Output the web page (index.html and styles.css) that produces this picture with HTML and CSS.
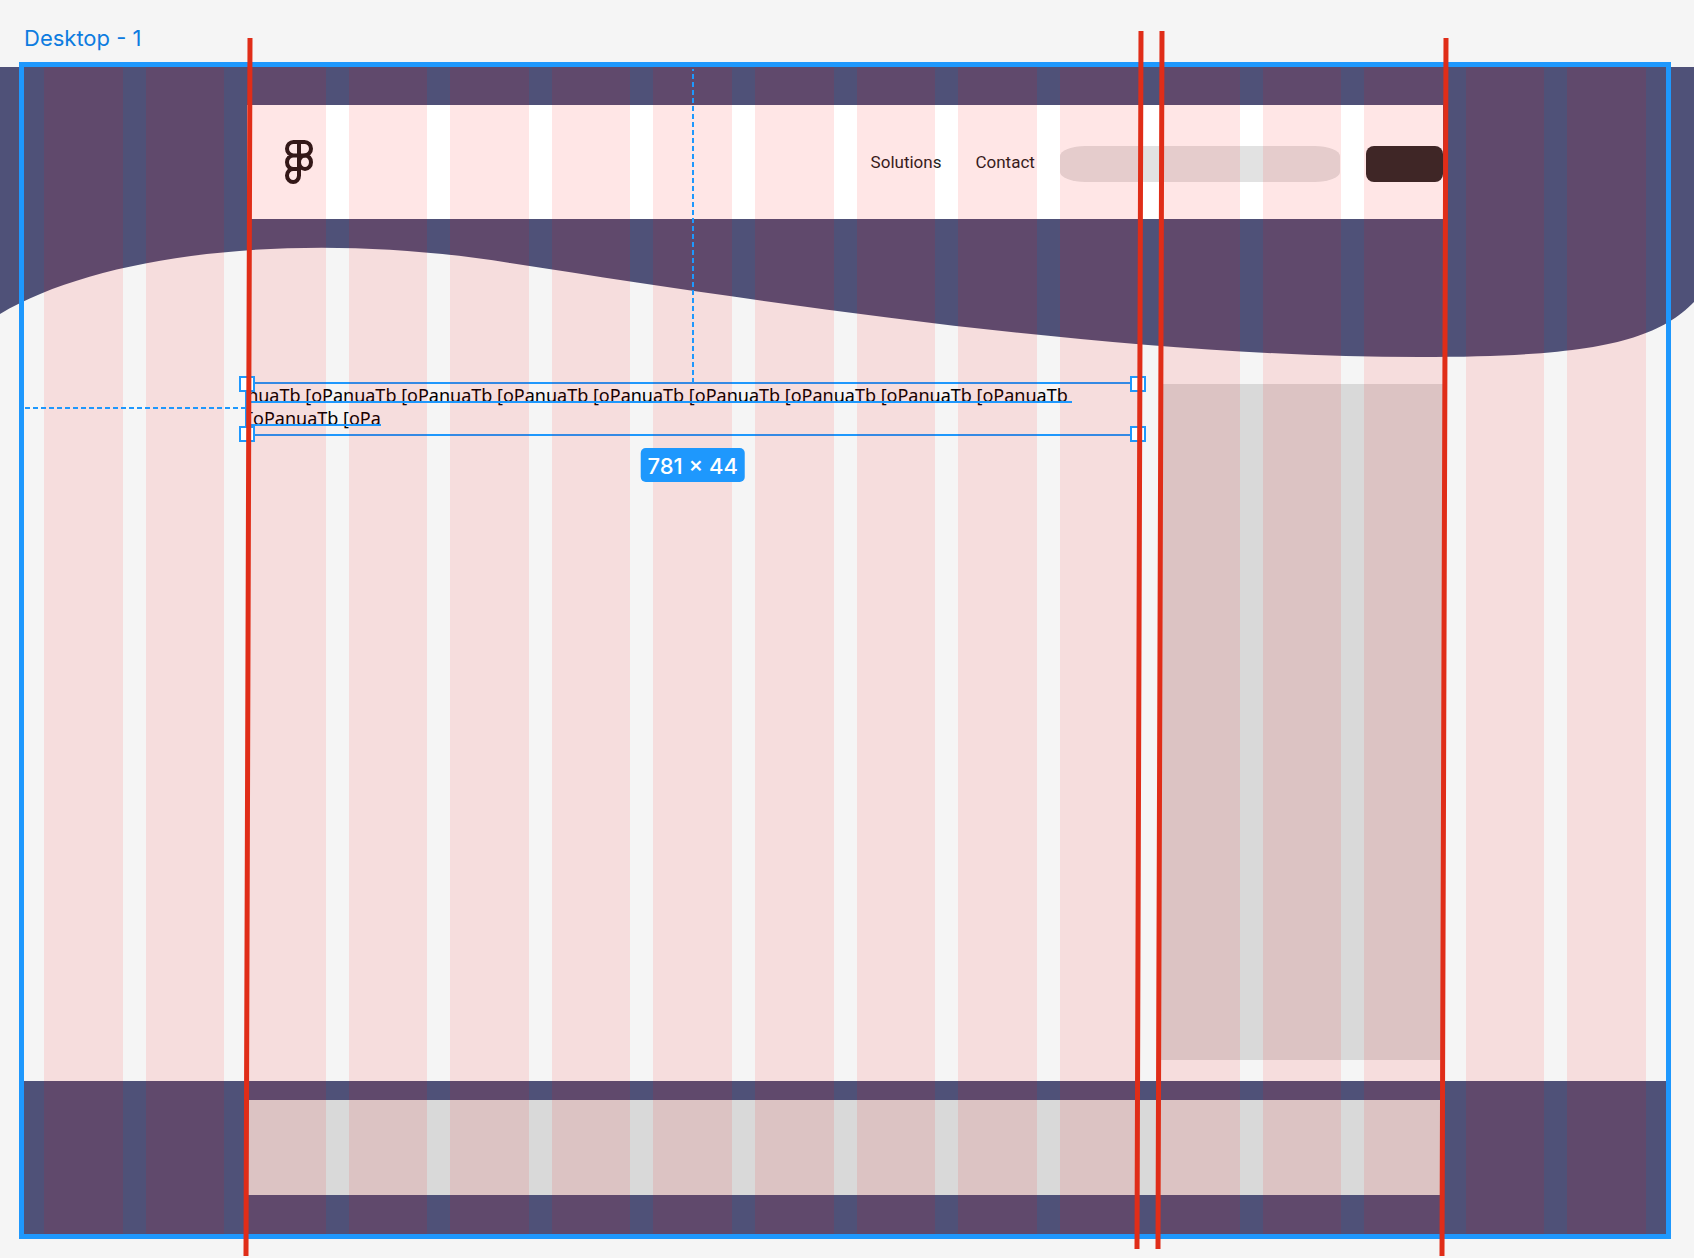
FILE: index.html
```html
<!DOCTYPE html>
<html lang="en">
<head>
<meta charset="utf-8">
<meta name="viewport" content="width=device-width, initial-scale=1">
<title>Desktop - 1</title>
<link rel="stylesheet" href="styles.css">
</head>
<body>
<div class="canvas">
  <svg class="wave" viewBox="0 0 1694 290" preserveAspectRatio="none" aria-hidden="true">
    <path d="M0 0H1694V235C1655 275 1590 290 1420 290C1130 290 800 241 510 196C300 162 100 187 0 247Z"/>
  </svg>

  <h1 class="frame-label">Desktop - 1</h1>

  <div class="frame">
    <header class="band grid">
      <div class="topbar">
        <svg class="logo" viewBox="0 0 28 44" aria-hidden="true">
          <path d="M14 2H8.500a6.500 6.700 0 0 0 0 13.400H14M14 2H19.500a6.500 6.700 0 0 1 0 13.400H14M14 15.400H8.500a6.500 6.800 0 0 0 0 13.600H14M14 29H8.200a6.200 6.500 0 0 0 0 13a5.800 6.500 0 0 0 5.800-6.500M14 2V35.500"/>
          <ellipse cx="20" cy="22.200" rx="6" ry="6.800"/>
        </svg>
        <nav class="nav">
          <a href="#">Solutions</a>
          <a href="#">Contact</a>
        </nav>
        <input class="search" type="search" aria-label="Search">
        <button class="action" type="button" aria-label="Go"></button>
      </div>
    </header>

    <main class="content grid">
      <div class="selection">
        <p class="sample">
          <span class="line">nuaTb [oPanuaTb [oPanuaTb [oPanuaTb [oPanuaTb [oPanuaTb [oPanuaTb [oPanuaTb [oPanuaTb </span>
          <span class="line">[oPanuaTb [oPa</span>
        </p>
        <i class="guide guide-top"></i>
        <i class="guide guide-left"></i>
        <i class="handle top left"></i>
        <i class="handle top right"></i>
        <i class="handle bottom left"></i>
        <i class="handle bottom right"></i>
        <span class="size">781 × 44</span>
      </div>
      <aside class="sidebar"></aside>
    </main>

    <footer class="footer grid">
      <div class="footer-card"></div>
    </footer>

    <div class="columns grid" aria-hidden="true">
      <i></i><i></i><i></i><i></i><i></i><i></i><i></i><i></i>
      <i></i><i></i><i></i><i></i><i></i><i></i><i></i><i></i>
    </div>
  </div>

  <svg class="rulers" viewBox="0 0 1694 1258" preserveAspectRatio="none" aria-hidden="true">
    <path d="M250 38L246 1256M1141 31L1137 1249M1162 31L1158 1249M1446 38L1442 1256"/>
  </svg>
</div>
</body>
</html>
```
FILE: styles.css
```css
:root {
  --blue: #1e98fd;
  --navy: #4f5178;
  --paper: #f5f5f5;
}

* {
  box-sizing: border-box;
}

body {
  margin: 0;
  background: var(--paper);
  font-family: Inter, sans-serif;
}

.canvas {
  position: relative;
  padding: 24px 23px 19px 19px;
  overflow: hidden;
}

.wave {
  position: absolute;
  top: 67px;
  left: 0;
  width: 100%;
  height: 290px;
  fill: var(--navy);
}

.frame-label {
  margin: 0 0 10px 5px;
  color: #0d7ce0;
  font-size: 22px;
  font-weight: 400;
  line-height: 28px;
}

.frame {
  position: relative;
  border: 5px solid var(--blue);
}

/* Sixteen-column layout shared by every band */
.grid {
  display: grid;
  grid-template-columns: repeat(16, minmax(0, 1fr));
  column-gap: 23px;
  padding: 0 20px;
}

.band {
  padding-top: 38px;
}

.topbar {
  grid-column: 3 / 15;
  display: flex;
  align-items: center;
  height: 114px;
  padding-left: 38px;
  background: #fff;
}

.logo {
  width: 28px;
  height: 44px;
  fill: none;
  stroke: #1e1a1a;
  stroke-width: 4;
}

.nav {
  display: flex;
  gap: 34px;
  margin-left: auto;
  margin-right: 25px;
  font-family: Roboto, sans-serif;
  font-size: 17px;
  line-height: 20px;
}

.nav a {
  color: #1e1e1e;
  text-decoration: none;
}

.search {
  width: 280px;
  height: 36px;
  margin: 4px 0 0;
  padding: 0 24px;
  border: 0;
  border-radius: 26px / 10px;
  background: #e2e2e2;
  appearance: none;
}

.action {
  width: 77px;
  height: 36px;
  margin: 4px 0 0 26px;
  padding: 0;
  border: 0;
  border-radius: 8px;
  background: #2a2a2a;
}

.content {
  padding-top: 163px;
  padding-bottom: 21px;
}

.selection {
  position: relative;
  grid-column: 3 / 12;
  align-self: start;
  margin: 0 -2px;
  padding-bottom: 4px;
  border: 2px solid var(--blue);
}

.sample {
  display: flex;
  flex-direction: column;
  align-items: flex-start;
  margin: 0;
  color: #000;
  font-family: "Noto Sans", sans-serif;
  font-size: 18px;
  line-height: 23px;
}

.line {
  position: relative;
  white-space: pre;
}

.line::after {
  content: "";
  position: absolute;
  z-index: 2;
  top: 17px;
  left: 0;
  width: 100%;
  height: 2px;
  background: var(--blue);
}

.handle {
  position: absolute;
  z-index: 2;
  width: 16px;
  height: 16px;
  border: 2px solid var(--blue);
  background: #fff;
}

.handle.top { top: -8px; }
.handle.bottom { bottom: -8px; }
.handle.left { left: -8px; }
.handle.right { right: -8px; }

.guide {
  position: absolute;
  z-index: 2;
}

.guide-top {
  bottom: 100%;
  left: 50%;
  width: 2px;
  height: 315px;
  background: repeating-linear-gradient(to bottom, var(--blue) 0 2px, transparent 2px 5px, var(--blue) 5px 8px);
  transform: translateX(-50%);
}

.guide-left {
  bottom: 50%;
  right: 100%;
  width: 222px;
  height: 2px;
  background: repeating-linear-gradient(to right, var(--blue) 0 5px, transparent 5px 8px);
}

.size {
  position: absolute;
  z-index: 2;
  top: 64px;
  left: 50%;
  padding: 4px 7px 2px;
  border-radius: 5px;
  background: var(--blue);
  color: #fff;
  font-size: 22px;
  font-weight: 500;
  line-height: 28px;
  white-space: nowrap;
  transform: translateX(-50%);
}

.sidebar {
  grid-column: 12 / 15;
  min-height: 676px;
  margin-top: 2px;
  background: #d9d9d9;
}

.footer {
  padding-top: 19px;
  padding-bottom: 39px;
  background: var(--navy);
}

.footer-card {
  grid-column: 3 / 15;
  height: 95px;
  background: #d9d9d9;
}

.columns {
  position: absolute;
  inset: 0;
  z-index: 1;
  pointer-events: none;
}

.columns i {
  background: rgba(255, 12, 8, 0.1);
}

.rulers {
  position: absolute;
  inset: 0;
  z-index: 3;
  width: 100%;
  height: 100%;
  fill: none;
  stroke: #e02d18;
  stroke-width: 5;
  pointer-events: none;
}
```
